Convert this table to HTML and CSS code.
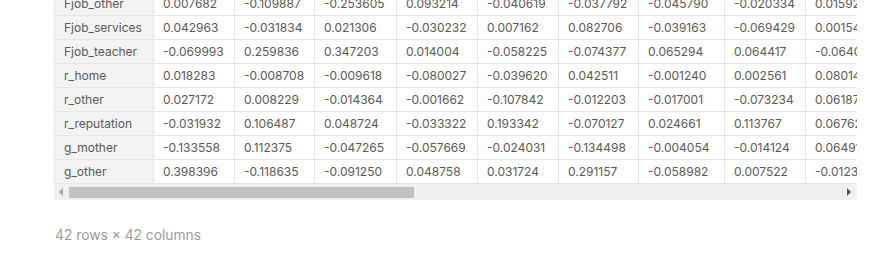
FILE: index.html
```html
<!DOCTYPE html>
<html>
<head>
<meta charset="utf-8">
<link rel="stylesheet" href="styles.css">
</head>
<body>
<div class="output">
  <div class="frame">
    <div class="scroller">
      <table class="df">
        <colgroup>
          <col class="c-idx"><col class="c1"><col class="c2"><col class="c3"><col class="c4"><col class="c5"><col class="c6"><col class="c7"><col class="c8"><col class="c9">
        </colgroup>
        <tbody>
          <tr><th>Fjob_other</th><td>0.007682</td><td>-0.109887</td><td>-0.253605</td><td>0.093214</td><td>-0.040619</td><td>-0.037792</td><td>-0.045790</td><td>-0.020334</td><td>0.015921</td></tr>
          <tr><th>Fjob_services</th><td>0.042963</td><td>-0.031834</td><td>0.021306</td><td>-0.030232</td><td>0.007162</td><td>0.082706</td><td>-0.039163</td><td>-0.069429</td><td>0.001548</td></tr>
          <tr><th>Fjob_teacher</th><td>-0.069993</td><td>0.259836</td><td>0.347203</td><td>0.014004</td><td>-0.058225</td><td>-0.074377</td><td>0.065294</td><td>0.064417</td><td>-0.064063</td></tr>
          <tr><th>r_home</th><td>0.018283</td><td>-0.008708</td><td>-0.009618</td><td>-0.080027</td><td>-0.039620</td><td>0.042511</td><td>-0.001240</td><td>0.002561</td><td>0.080145</td></tr>
          <tr><th>r_other</th><td>0.027172</td><td>0.008229</td><td>-0.014364</td><td>-0.001662</td><td>-0.107842</td><td>-0.012203</td><td>-0.017001</td><td>-0.073234</td><td>0.061873</td></tr>
          <tr><th>r_reputation</th><td>-0.031932</td><td>0.106487</td><td>0.048724</td><td>-0.033322</td><td>0.193342</td><td>-0.070127</td><td>0.024661</td><td>0.113767</td><td>0.067628</td></tr>
          <tr><th>g_mother</th><td>-0.133558</td><td>0.112375</td><td>-0.047265</td><td>-0.057669</td><td>-0.024031</td><td>-0.134498</td><td>-0.004054</td><td>-0.014124</td><td>0.064912</td></tr>
          <tr><th>g_other</th><td>0.398396</td><td>-0.118635</td><td>-0.091250</td><td>0.048758</td><td>0.031724</td><td>0.291157</td><td>-0.058982</td><td>0.007522</td><td>-0.012355</td></tr>
        </tbody>
      </table>
    </div>
    <div class="hbar">
      <span class="arrow-left"></span>
      <div class="track"><div class="thumb"></div></div>
      <span class="arrow-right"></span>
    </div>
  </div>
  <div class="shape">42 rows × 42 columns</div>
</div>
</body>
</html>
```

FILE: styles.css
```css
html, body {
  margin: 0;
  padding: 0;
  background: #ffffff;
}
body {
  font-family: Inter, "Noto Sans", sans-serif;
  color: #5a5a5a;
  overflow: hidden;
}
.output {
  padding-left: 54px;
  margin-top: -9px;
}
.frame {
  width: 803px;
}
.scroller {
  width: 803px;
  overflow: hidden;
}
.df {
  border-collapse: collapse;
  table-layout: fixed;
  width: 832px;
  font-size: 12px;
}
.c-idx { width: 99px; }
.c1 { width: 81px; }
.c2 { width: 80px; }
.c3 { width: 82px; }
.c4 { width: 81px; }
.c5 { width: 81px; }
.c6 { width: 80px; }
.c7 { width: 86px; }
.c8 { width: 81px; }
.c9 { width: 81px; }
.df th, .df td {
  height: 23px;
  padding: 0 8px 0 9px;
  text-align: left;
  font-weight: 400;
  white-space: nowrap;
  overflow: hidden;
  border: 1px solid #e6e6e6;
  line-height: 23px;
}
.df th {
  background: #f3f3f3;
}
.df td {
  background: #ffffff;
}
.hbar {
  display: flex;
  align-items: center;
  height: 16px;
  background: #f0f0f0;
}
.arrow-left {
  width: 0;
  height: 0;
  margin-left: 5px;
  border-top: 4px solid transparent;
  border-bottom: 4px solid transparent;
  border-right: 4px solid #a3a3a3;
}
.track {
  flex: 1;
  height: 11px;
  margin-left: 6px;
  margin-right: 6px;
}
.thumb {
  width: 345px;
  height: 11px;
  background: #c1c1c1;
}
.arrow-right {
  width: 0;
  height: 0;
  margin-right: 6px;
  border-top: 4px solid transparent;
  border-bottom: 4px solid transparent;
  border-left: 4px solid #505050;
}
.shape {
  margin-top: 27px;
  font-size: 13.8px;
  color: #9b9b9b;
  padding-left: 1px;
}
```
